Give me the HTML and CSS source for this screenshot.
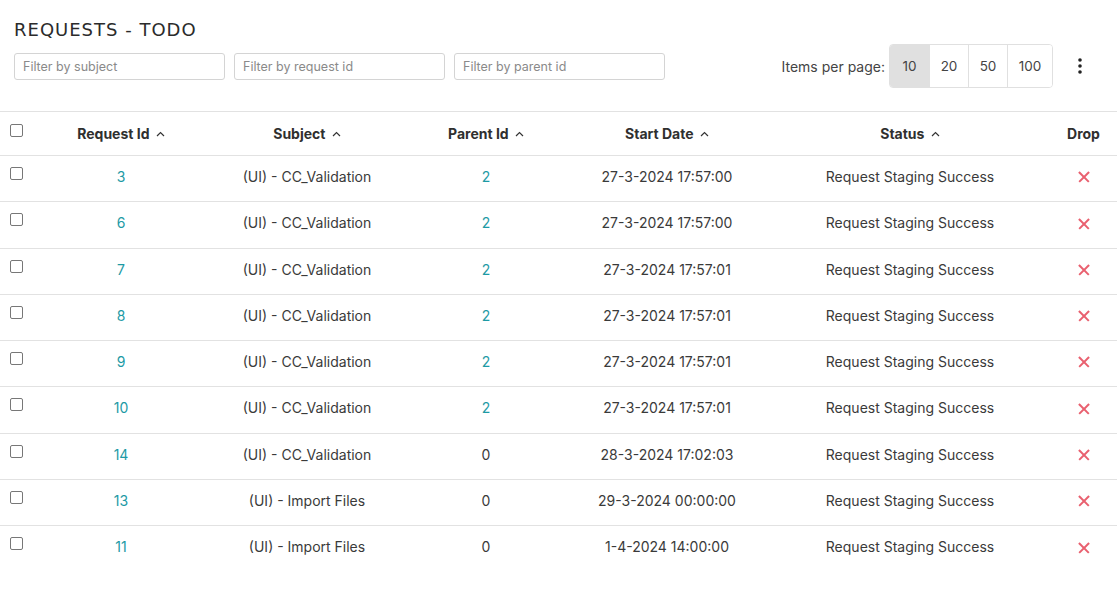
FILE: index.html
```html
<!DOCTYPE html>
<html lang="en">
<head>
<meta charset="utf-8">
<title>Requests - Todo</title>
<link rel="stylesheet" href="styles.css">
</head>
<body>
<div class="page">
  <header class="top">
    <h1 class="title">REQUESTS - TODO</h1>
    <div class="toolbar">
      <div class="filters">
        <input class="filter" type="text" placeholder="Filter by subject">
        <input class="filter" type="text" placeholder="Filter by request id">
        <input class="filter" type="text" placeholder="Filter by parent id">
      </div>
      <div class="pager">
        <span class="pager-label">Items per page:</span>
        <div class="pager-group">
          <button class="pager-btn active">10</button>
          <button class="pager-btn">20</button>
          <button class="pager-btn">50</button>
          <button class="pager-btn wide">100</button>
        </div>
        <button class="kebab" aria-label="More">
          <svg width="4" height="16" viewBox="0 0 4 16"><circle cx="2" cy="2" r="1.8" fill="#222"/><circle cx="2" cy="8" r="1.8" fill="#222"/><circle cx="2" cy="14" r="1.8" fill="#222"/></svg>
        </button>
      </div>
    </div>
  </header>

  <table class="grid">
    <colgroup>
      <col class="c-check"><col class="c-req"><col class="c-subj"><col class="c-parent"><col class="c-date"><col class="c-status"><col class="c-drop">
    </colgroup>
    <thead>
      <tr>
        <th class="check"><span class="box"></span></th>
        <th>Request Id <svg class="sort" width="9" height="6" viewBox="0 0 9 6"><path d="M1 5 L4.5 1.5 L8 5" fill="none" stroke="#333" stroke-width="1.2"/></svg></th>
        <th>Subject <svg class="sort" width="9" height="6" viewBox="0 0 9 6"><path d="M1 5 L4.5 1.5 L8 5" fill="none" stroke="#333" stroke-width="1.2"/></svg></th>
        <th>Parent Id <svg class="sort" width="9" height="6" viewBox="0 0 9 6"><path d="M1 5 L4.5 1.5 L8 5" fill="none" stroke="#333" stroke-width="1.2"/></svg></th>
        <th>Start Date <svg class="sort" width="9" height="6" viewBox="0 0 9 6"><path d="M1 5 L4.5 1.5 L8 5" fill="none" stroke="#333" stroke-width="1.2"/></svg></th>
        <th>Status <svg class="sort" width="9" height="6" viewBox="0 0 9 6"><path d="M1 5 L4.5 1.5 L8 5" fill="none" stroke="#333" stroke-width="1.2"/></svg></th>
        <th>Drop</th>
      </tr>
    </thead>
    <tbody>
      <tr><td class="check"><span class="box"></span></td><td><a class="link">3</a></td><td>(UI) - CC_Validation</td><td><a class="link">2</a></td><td>27-3-2024 17:57:00</td><td>Request Staging Success</td><td><span class="x"></span></td></tr>
      <tr><td class="check"><span class="box"></span></td><td><a class="link">6</a></td><td>(UI) - CC_Validation</td><td><a class="link">2</a></td><td>27-3-2024 17:57:00</td><td>Request Staging Success</td><td><span class="x"></span></td></tr>
      <tr><td class="check"><span class="box"></span></td><td><a class="link">7</a></td><td>(UI) - CC_Validation</td><td><a class="link">2</a></td><td>27-3-2024 17:57:01</td><td>Request Staging Success</td><td><span class="x"></span></td></tr>
      <tr><td class="check"><span class="box"></span></td><td><a class="link">8</a></td><td>(UI) - CC_Validation</td><td><a class="link">2</a></td><td>27-3-2024 17:57:01</td><td>Request Staging Success</td><td><span class="x"></span></td></tr>
      <tr><td class="check"><span class="box"></span></td><td><a class="link">9</a></td><td>(UI) - CC_Validation</td><td><a class="link">2</a></td><td>27-3-2024 17:57:01</td><td>Request Staging Success</td><td><span class="x"></span></td></tr>
      <tr><td class="check"><span class="box"></span></td><td><a class="link">10</a></td><td>(UI) - CC_Validation</td><td><a class="link">2</a></td><td>27-3-2024 17:57:01</td><td>Request Staging Success</td><td><span class="x"></span></td></tr>
      <tr><td class="check"><span class="box"></span></td><td><a class="link">14</a></td><td>(UI) - CC_Validation</td><td>0</td><td>28-3-2024 17:02:03</td><td>Request Staging Success</td><td><span class="x"></span></td></tr>
      <tr><td class="check"><span class="box"></span></td><td><a class="link">13</a></td><td>(UI) - Import Files</td><td>0</td><td>29-3-2024 00:00:00</td><td>Request Staging Success</td><td><span class="x"></span></td></tr>
      <tr><td class="check"><span class="box"></span></td><td><a class="link">11</a></td><td>(UI) - Import Files</td><td>0</td><td>1-4-2024 14:00:00</td><td>Request Staging Success</td><td><span class="x"></span></td></tr>
    </tbody>
  </table>
</div>
</body>
</html>
```

FILE: styles.css
```css
* { box-sizing: border-box; }

html, body {
  margin: 0;
  padding: 0;
  background: #fff;
}

body {
  font-family: "Inter", "Noto Sans", "Liberation Sans", sans-serif;
  font-size: 14px;
  color: #3a3a3a;
}

.top {
  padding: 18px 0 0 14px;
}

.title {
  margin: 0;
  font-family: "DejaVu Sans", "Liberation Sans", sans-serif;
  font-weight: 400;
  font-size: 18px;
  line-height: 24px;
  letter-spacing: 1px;
  color: #2b2b2b;
}

.toolbar {
  margin-top: 2px;
  display: flex;
  align-items: center;
  justify-content: space-between;
  height: 44px;
}

.filters {
  display: flex;
  gap: 9px;
}

.filter {
  width: 211px;
  height: 27px;
  border: 1px solid #d4d4d4;
  border-radius: 3px;
  padding: 0 8px;
  font-family: inherit;
  font-size: 12.5px;
  color: #333;
  outline: none;
}

.filter::placeholder {
  color: #8a8a8a;
}

.pager {
  display: flex;
  align-items: center;
  height: 44px;
}

.pager-label {
  font-size: 14px;
  color: #444;
  margin-right: 4px;
}

.pager-group {
  display: flex;
  height: 44px;
  border: 1px solid #e0e0e0;
  border-radius: 4px;
  overflow: hidden;
}

.pager-btn {
  border: none;
  border-left: 1px solid #e0e0e0;
  background: #fff;
  padding: 0;
  width: 39px;
  font-family: inherit;
  font-size: 13.5px;
  color: #444;
}

.pager-btn:first-child {
  border-left: none;
}

.pager-btn.wide {
  width: 45px;
}

.pager-btn.active {
  background: #e0e0e0;
}

.kebab {
  width: 40px;
  height: 40px;
  margin: 0 17px 0 7px;
  border: none;
  background: transparent;
  display: flex;
  align-items: center;
  justify-content: center;
  padding: 0;
}

.grid {
  margin-top: 23px;
  width: 100%;
  border-collapse: collapse;
  table-layout: fixed;
}

.c-check { width: 36px; }
.c-req { width: 170px; }
.c-subj { width: 202px; }
.c-parent { width: 156px; }
.c-date { width: 206px; }
.c-status { width: 280px; }
.c-drop { width: 67px; }

.grid th,
.grid td {
  text-align: center;
  padding: 0;
  border-bottom: 1px solid #e2e2e2;
}

.grid thead th {
  height: 44px;
  border-top: 1px solid #e2e2e2;
  font-weight: 700;
  color: #2f2f2f;
}

.grid tbody td {
  height: 46.25px;
  padding-bottom: 4px;
}

.grid tbody tr:last-child td {
  border-bottom: none;
}

.grid .check {
  text-align: left;
  padding-left: 10px;
}

.box {
  display: block;
  width: 13px;
  height: 13px;
  border: 1px solid #777;
  border-radius: 2px;
  margin-top: -6px;
}

.grid thead .box {
  margin-top: -7px;
}

.sort {
  margin-left: 3px;
  vertical-align: 2px;
}

.link {
  color: #1d9aa5;
  text-decoration: none;
}

.x {
  display: inline-block;
  position: relative;
  width: 12px;
  height: 12px;
  vertical-align: -1px;
}

.x::before,
.x::after {
  content: "";
  position: absolute;
  left: -1px;
  top: 5.2px;
  width: 14px;
  height: 1.6px;
  background: #e9606f;
  transform: rotate(45deg);
}

.x::after {
  transform: rotate(-45deg);
}
```
